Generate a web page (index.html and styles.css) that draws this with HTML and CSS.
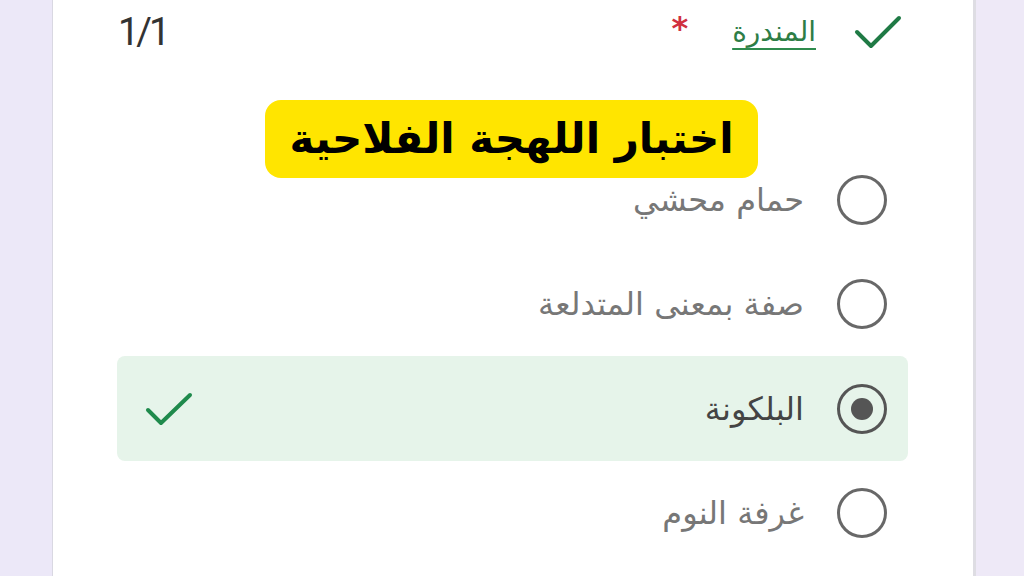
FILE: index.html
```html
<!DOCTYPE html>
<html lang="ar">
<head>
<meta charset="utf-8">
<link rel="stylesheet" href="styles.css">
</head>
<body>
<div class="page">
  <div class="gutter left"></div>
  <main class="card" dir="rtl">
    <header class="head">
      <div class="head-title">
        <svg class="check check-top" viewBox="0 0 48 36" width="48" height="36"><path d="M3 18 L17 32 L45 4" fill="none" stroke="#1f7a45" stroke-width="4" stroke-linecap="round" stroke-linejoin="round"/></svg>
        <span class="title">المندرة</span>
        <span class="req">*</span>
      </div>
      <span class="counter" dir="ltr">1/1</span>
    </header>
    <ul class="options">
      <li class="opt"><span class="radio"></span><span class="label">حمام محشي</span></li>
      <li class="opt"><span class="radio"></span><span class="label">صفة بمعنى المتدلعة</span></li>
      <li class="opt selected"><span class="radio on"></span><span class="label">البلكونة</span>
        <svg class="check check-row" viewBox="0 0 48 36" width="48" height="36"><path d="M3 19 L16 32 L45 4" fill="none" stroke="#1f8a4c" stroke-width="4" stroke-linecap="round" stroke-linejoin="round"/></svg>
      </li>
      <li class="opt"><span class="radio"></span><span class="label">غرفة النوم</span></li>
    </ul>
    <div class="banner">اختبار اللهجة الفلاحية</div>
  </main>
  <div class="gutter right"></div>
</div>
</body>
</html>
```
FILE: styles.css
```css
html, body {
  margin: 0;
  padding: 0;
}
body {
  width: 1024px;
  height: 576px;
  overflow: hidden;
  background: #ece9f8;
  font-family: "DejaVu Sans", "Noto Sans", sans-serif;
}
.page {
  display: flex;
  height: 576px;
}
.gutter {
  background: #ece8f8;
}
.gutter.left {
  width: 52px;
  border-right: 1px solid #d9d8e2;
}
.gutter.right {
  flex: 1;
  border-left: 3px solid #dedde3;
  background: #eee9f7;
}
.card {
  position: relative;
  width: 920px;
  background: #fff;
  box-sizing: border-box;
  padding: 0 65px 0 64px;
}
.head {
  height: 70px;
  display: flex;
  justify-content: space-between;
  align-items: flex-start;
  padding: 0 6px 0 1px;
}
.head-title {
  display: flex;
  align-items: center;
  margin-top: 10px;
}
.check-top {
  margin-left: 38px;
}
.title {
  font-size: 28px;
  color: #2e7d46;
  text-decoration: underline;
  text-decoration-color: #2e8b4d;
  text-underline-offset: 7px;
  line-height: 44px;
}
.req {
  color: #d0303f;
  font-size: 32px;
  font-weight: bold;
  margin-right: 44px;
  margin-top: -8px;
}
.counter {
  font-family: "Roboto", "Liberation Sans", sans-serif;
  font-size: 38px;
  letter-spacing: -3px;
  color: #333;
  margin-top: 10px;
  line-height: 44px;
}
.options {
  list-style: none;
  margin: 78px 0 0;
  padding: 0;
}
.opt {
  display: flex;
  align-items: center;
  height: 104px;
  padding-right: 21px;
  padding-left: 28px;
  border-radius: 8px;
}
.opt.selected {
  background: #e6f4ea;
  height: 105px;
}
.radio {
  width: 44px;
  height: 44px;
  border: 3px solid #686868;
  border-radius: 50%;
  flex: none;
  position: relative;
}
.radio.on {
  border-color: #555;
}
.radio.on::after {
  content: "";
  position: absolute;
  left: 11px;
  top: 11px;
  width: 22px;
  height: 22px;
  border-radius: 50%;
  background: #555;
}
.label {
  font-size: 32px;
  color: #777;
  margin-right: 33px;
}
.selected .label {
  color: #444;
}
.check-row {
  margin-right: auto;
}
.banner {
  position: absolute;
  top: 100px;
  left: 212px;
  width: 493px;
  height: 78px;
  background: #ffe500;
  border-radius: 16px;
  display: flex;
  align-items: center;
  justify-content: center;
  font-weight: bold;
  font-size: 42px;
  color: #000;
  line-height: 1;
}
```
